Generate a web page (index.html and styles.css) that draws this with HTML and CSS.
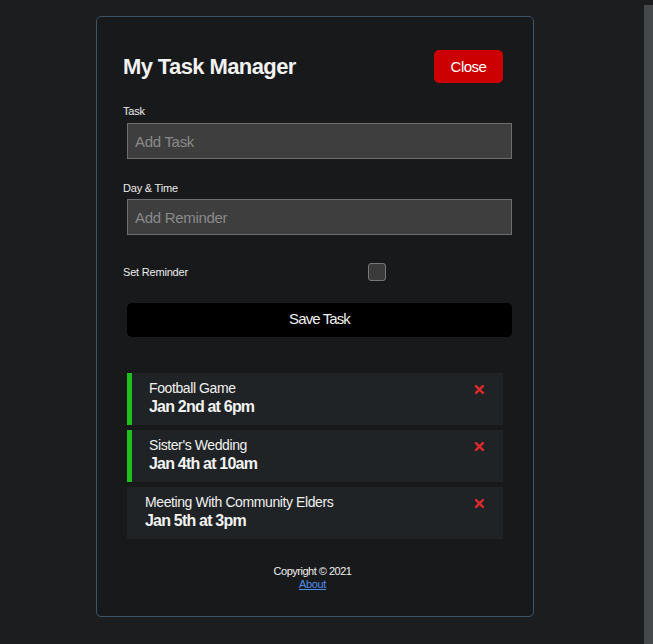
FILE: index.html
```html
<!DOCTYPE html>
<html lang="en">
<head>
<meta charset="utf-8">
<title>My Task Manager</title>
<link rel="stylesheet" href="styles.css">
</head>
<body>
<div class="page">
  <main class="main">
    <div class="card">
      <header class="header">
        <h1 class="title">My Task Manager</h1>
        <button class="btn-close">Close</button>
      </header>
      <form class="form">
        <div class="field">
          <label class="label">Task</label>
          <input class="input" type="text" placeholder="Add Task">
        </div>
        <div class="field">
          <label class="label">Day &amp; Time</label>
          <input class="input" type="text" placeholder="Add Reminder">
        </div>
        <div class="check-row">
          <label class="label check-label">Set Reminder</label>
          <span class="checkbox"></span>
        </div>
        <button type="button" class="btn-save">Save Task</button>
      </form>
      <div class="tasks">
        <div class="task reminder">
          <div class="task-text">
            <div class="task-name">Football Game</div>
            <div class="task-day">Jan 2nd at 6pm</div>
          </div>
          <svg class="x" width="9" height="9" viewBox="0 0 9 9"><path d="M1 1L8 8M8 1L1 8" stroke="#e2292b" stroke-width="2.4" stroke-linecap="square"/></svg>
        </div>
        <div class="task reminder">
          <div class="task-text">
            <div class="task-name">Sister's Wedding</div>
            <div class="task-day">Jan 4th at 10am</div>
          </div>
          <svg class="x" width="9" height="9" viewBox="0 0 9 9"><path d="M1 1L8 8M8 1L1 8" stroke="#e2292b" stroke-width="2.4" stroke-linecap="square"/></svg>
        </div>
        <div class="task">
          <div class="task-text">
            <div class="task-name">Meeting With Community Elders</div>
            <div class="task-day">Jan 5th at 3pm</div>
          </div>
          <svg class="x" width="9" height="9" viewBox="0 0 9 9"><path d="M1 1L8 8M8 1L1 8" stroke="#e2292b" stroke-width="2.4" stroke-linecap="square"/></svg>
        </div>
      </div>
      <footer class="footer">
        <p class="copy">Copyright &copy; 2021</p>
        <a class="about" href="#">About</a>
      </footer>
    </div>
  </main>
  <div class="scrollbar"></div>
</div>
</body>
</html>
```

FILE: styles.css
```css
* { box-sizing: border-box; }
html, body {
  margin: 0;
  padding: 0;
  height: 100%;
  background: #1c1d1f;
  font-family: "Liberation Sans", Arial, sans-serif;
  color: #ececec;
}
.page {
  display: flex;
  height: 100%;
}
.main {
  flex: 1;
  padding-top: 16px;
  padding-left: 96px;
}
.scrollbar {
  width: 9px;
  margin-top: 5px;
  background: #46494c;
}
.card {
  width: 438px;
  background: #18191b;
  border: 1px solid #3c5466;
  border-radius: 5px;
  padding: 33px 27px 25px 26px;
}
.header {
  display: flex;
  align-items: center;
  justify-content: space-between;
  height: 33px;
  margin-bottom: 22px;
  padding-right: 3px;
}
.title {
  margin: 0;
  font-size: 22px;
  font-weight: bold;
  letter-spacing: -0.6px;
  color: #f2f2f2;
}
.btn-close {
  width: 69px;
  height: 33px;
  border: none;
  border-radius: 5px;
  background: #cc0000;
  color: #fff;
  font-family: inherit;
  font-size: 15px;
  letter-spacing: -0.5px;
  padding: 0;
}
.form { margin: 0; }
.field { margin-bottom: 23px; }
.label {
  display: block;
  font-size: 11px;
  line-height: 13px;
  color: #ececec;
  letter-spacing: -0.2px;
}
.field .label { margin-bottom: 5px; }
.field + .field .label { margin-bottom: 4px; }
.input {
  display: block;
  width: 385px;
  height: 36px;
  margin-left: 4px;
  background: #3e3e3e;
  border: 1px solid #6e6e6e;
  padding: 0 7px;
  font-family: inherit;
  font-size: 15px;
  letter-spacing: -0.3px;
  color: #ddd;
}
.input::placeholder { color: #8a8a8a; }
.check-row {
  display: grid;
  grid-template-columns: 245px 18px;
  align-items: center;
  height: 18px;
  margin-top: 28px;
  margin-bottom: 22px;
}
.checkbox {
  width: 18px;
  height: 18px;
  background: #3b3b3b;
  border: 1px solid #777;
  border-radius: 3px;
}
.btn-save {
  display: block;
  width: 385px;
  height: 34px;
  margin-left: 4px;
  border: none;
  border-radius: 5px;
  background: #000;
  color: #f0f0f0;
  font-family: inherit;
  font-size: 15px;
  line-height: 30px;
  padding: 0 0 2px 0;
  letter-spacing: -0.9px;
}
.tasks {
  margin-top: 36px;
  padding-left: 4px;
}
.task {
  display: flex;
  justify-content: space-between;
  width: 376px;
  height: 52px;
  margin-bottom: 5px;
  background: #202325;
  padding: 7px 19px 0 18px;
}
.task.reminder {
  border-left: 5px solid #1fbf1f;
  padding-left: 17px;
}
.task-name {
  font-size: 14px;
  line-height: 16px;
  letter-spacing: -0.4px;
  color: #f0f0f0;
  margin-bottom: 2px;
}
.task-day {
  font-size: 16px;
  line-height: 18px;
  font-weight: bold;
  letter-spacing: -0.8px;
  color: #f2f2f2;
}
.x {
  margin-top: 5px;
  flex: none;
}
.footer {
  margin-top: 26px;
  text-align: center;
  padding-right: 4px;
  font-size: 11px;
  line-height: 13px;
}
.copy {
  margin: 0;
  font-size: 11px;
  line-height: 13px;
  letter-spacing: -0.5px;
  color: #f0f0f0;
}
.about {
  display: inline-block;
  font-size: 11px;
  line-height: 12px;
  color: #4d8ee8;
  letter-spacing: -0.3px;
}
```
